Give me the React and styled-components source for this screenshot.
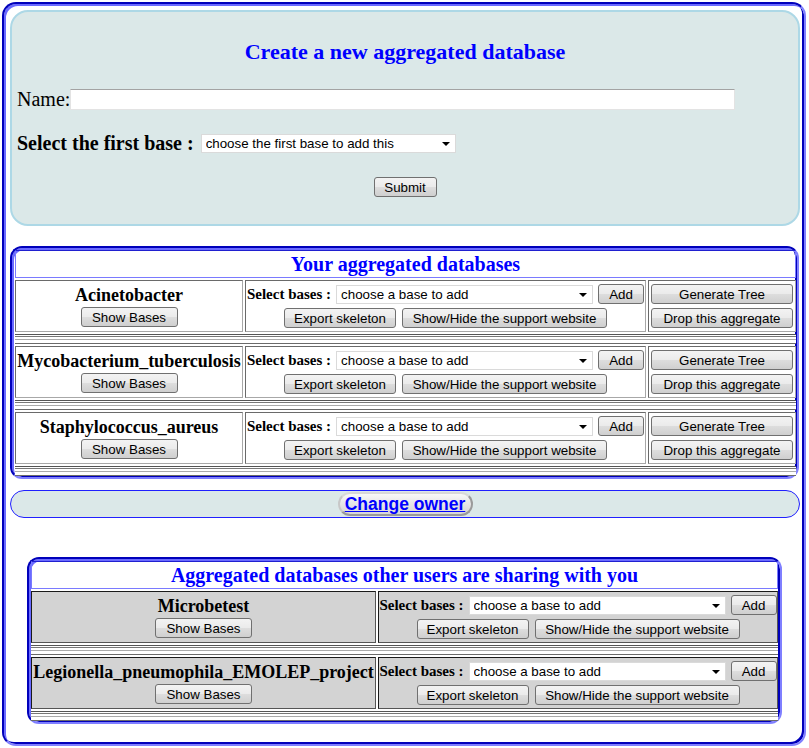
import React from "react";
import styled, { createGlobalStyle } from "styled-components";

const Global = createGlobalStyle`
  html, body { margin: 0; padding: 0; background: #fff; }
  body { font-family: "Liberation Serif", "Times New Roman", serif; color: #000; }
`;

const Page = styled.div`
  margin: 2px 3px 2px 2px;
  border: 2px solid;
  border-color: #0000bb #7f7fff #7f7fff #0000bb;
  box-shadow: inset 2px 2px 0 #6a6aff, inset -2px -2px 0 #0000bb;
  border-radius: 14px;
  padding: 6px 4px 20px 6px;
`;

const CreatePanel = styled.div`
  background: #dbe8e8;
  border: 2px solid #add8e6;
  border-radius: 18px;
  padding: 0 5px 27px 5px;
`;

const PanelTitle = styled.h2`
  margin: 27px 0 0;
  font: bold 22px/25px "Liberation Serif", "Times New Roman", serif;
  color: #0000ff;
  text-align: center;
`;

const FieldRow = styled.div`
  display: flex;
  align-items: center;
  height: 23px;
  margin-top: ${(p) => p.$top}px;
`;

const FieldLabel = styled.span`
  font: ${(p) => (p.$bold ? "bold" : "normal")} 20px/23px "Liberation Serif", "Times New Roman", serif;
  white-space: nowrap;
  margin-right: ${(p) => p.$gap || 0}px;
`;

const NameInput = styled.input`
  box-sizing: border-box;
  width: 665px;
  height: 21px;
  border: 1px solid #e3e3e3;
  border-top-color: #a3a3a3;
  background: #fff;
  padding: 0 3px;
  outline: none;
`;

const SelectWrap = styled.span`
  position: relative;
  display: inline-block;
  width: ${(p) => p.$w}px;
  height: 19px;
  flex: none;
  &::after {
    content: "";
    position: absolute;
    right: 6px;
    top: 8px;
    border-left: 4px solid transparent;
    border-right: 4px solid transparent;
    border-top: 4px solid #000;
    pointer-events: none;
  }
`;

const Select = styled.select`
  appearance: none;
  -webkit-appearance: none;
  box-sizing: border-box;
  width: 100%;
  height: 100%;
  margin: 0;
  border: 1px solid #dadada;
  border-radius: 0;
  background: #fff;
  color: #000;
  padding: 0 0 0 4px;
  font: 13.33px "Liberation Sans", Arial, sans-serif;
  outline: none;
`;

const Btn = styled.button`
  box-sizing: border-box;
  flex: none;
  height: 20px;
  width: ${(p) => (p.$w ? `${p.$w}px` : "100%")};
  margin: 0;
  padding: 0;
  border: 1px solid #707070;
  border-radius: 3px;
  background: linear-gradient(#f3f3f3 0%, #ebebeb 48%, #dddddd 52%, #cfcfcf 100%);
  color: #000;
  font: 13.33px "Liberation Sans", Arial, sans-serif;
  white-space: nowrap;
  cursor: pointer;
`;

const SubmitRow = styled.div`
  display: flex;
  justify-content: center;
  margin-top: 22px;
`;

const Section = styled.div`
  margin: ${(p) => p.$margin};
  border: 2px solid;
  border-color: #0000bb #7f7fff #7f7fff #0000bb;
  box-shadow: inset 2px 2px 0 #6a6aff, inset -2px -2px 0 #0000bb;
  border-radius: 12px;
  padding: 2px ${(p) => p.$padR}px 1px ${(p) => p.$padL}px;
  display: grid;
  grid-template-columns: ${(p) => p.$cols};
  gap: 2px;
  background: #fff;
`;

const SectionTitle = styled.div`
  grid-column: 1 / -1;
  box-sizing: border-box;
  height: 28px;
  border: 1px solid #7a7aff;
  border-top-color: #2020d0;
  display: flex;
  align-items: center;
  justify-content: center;
  font: bold 20px/23px "Liberation Serif", "Times New Roman", serif;
  color: #0000ff;
  white-space: nowrap;
`;

const Cell = styled.div`
  box-sizing: border-box;
  height: 52px;
  border: 1px solid;
  border-color: ${(p) => (p.$shaded ? "#1a1a1a #555 #555 #1a1a1a" : "#6a6a6a #a8a8a8 #a8a8a8 #6a6a6a")};
  background: ${(p) => (p.$shaded ? "#d3d3d3" : "#fff")};
  display: flex;
  flex-direction: column;
  align-items: ${(p) => (p.$stretch ? "stretch" : "center")};
  padding: ${(p) => p.$pad};
  gap: ${(p) => p.$gap}px;
  min-width: 0;
`;

const DbName = styled.div`
  font: bold 18px/22px "Liberation Serif", "Times New Roman", serif;
  white-space: nowrap;
`;

const ActionRow = styled.div`
  display: flex;
  align-items: center;
  gap: ${(p) => p.$gap}px;
`;

const SmallLabel = styled.span`
  font: bold 15px/18px "Liberation Serif", "Times New Roman", serif;
  white-space: nowrap;
`;

const Separator = styled.div`
  grid-column: 1 / -1;
  box-sizing: border-box;
  height: 10px;
  border-top: 1px solid #555;
  border-bottom: 1px solid #6a6a6a;
  background: linear-gradient(
    to bottom,
    #fff 0 1px,
    #777 1px 2px,
    #fff 2px 4px,
    #aaa 4px 5px,
    #fff 5px
  );
`;

const OwnerBar = styled.div`
  box-sizing: border-box;
  height: 28px;
  margin-top: 11px;
  border: 1px solid #2020ff;
  border-radius: 14px;
  background: #dbe8e8;
  display: flex;
  align-items: center;
  justify-content: center;
`;

const OwnerButton = styled.button`
  box-sizing: border-box;
  width: 135px;
  height: 24px;
  margin: 0;
  padding: 0;
  border: 2px solid;
  border-color: #d8d8d8 #9a9a9a #9a9a9a #c8c8c8;
  border-radius: 12px;
  background: linear-gradient(#f8f8f8, #e6e6e6 50%, #d6d6d6);
  color: #0000ff;
  font: bold 17.5px "Liberation Sans", Arial, sans-serif;
  text-decoration: underline;
  cursor: pointer;
`;

const mine = ["Acinetobacter", "Mycobacterium_tuberculosis", "Staphylococcus_aureus"];
const shared = ["Microbetest", "Legionella_pneumophila_EMOLEP_project"];

function BaseActions() {
  return (
    <>
      <ActionRow $gap={5}>
        <SmallLabel>Select bases :</SmallLabel>
        <SelectWrap $w={257}>
          <Select defaultValue="">
            <option value="">choose a base to add</option>
          </Select>
        </SelectWrap>
        <Btn $w={46}>Add</Btn>
      </ActionRow>
      <ActionRow $gap={6}>
        <Btn $w={112}>Export skeleton</Btn>
        <Btn $w={205}>Show/Hide the support website</Btn>
      </ActionRow>
    </>
  );
}

export default function App() {
  return (
    <>
      <Global />
      <Page>
        <CreatePanel>
          <PanelTitle>Create a new aggregated database</PanelTitle>
          <FieldRow $top={24}>
            <FieldLabel>Name:</FieldLabel>
            <NameInput type="text" />
          </FieldRow>
          <FieldRow $top={21}>
            <FieldLabel $bold $gap={7}>Select the first base :</FieldLabel>
            <SelectWrap $w={255}>
              <Select defaultValue="">
                <option value="">choose the first base to add this</option>
              </Select>
            </SelectWrap>
          </FieldRow>
          <SubmitRow>
            <Btn $w={63}>Submit</Btn>
          </SubmitRow>
        </CreatePanel>

        <Section $margin="20px 1px 0 0" $cols="228px 401px 1fr" $padL={3} $padR={1}>
          <SectionTitle>Your aggregated databases</SectionTitle>
          {mine.map((name) => (
            <React.Fragment key={name}>
              <Cell $pad="3px 0 0" $gap={1}>
                <DbName>{name}</DbName>
                <Btn $w={97}>Show Bases</Btn>
              </Cell>
              <Cell $pad="3px 0 0" $gap={4}>
                <BaseActions />
              </Cell>
              <Cell $pad="3px 2px 0" $gap={4} $stretch>
                <Btn>Generate Tree</Btn>
                <Btn>Drop this aggregate</Btn>
              </Cell>
              <Separator />
            </React.Fragment>
          ))}
        </Section>

        <OwnerBar>
          <OwnerButton>Change owner</OwnerButton>
        </OwnerBar>

        <Section $margin="39px 18px 0 17px" $cols="345px 1fr" $padL={2} $padR={2}>
          <SectionTitle>Aggregated databases other users are sharing with you</SectionTitle>
          {shared.map((name) => (
            <React.Fragment key={name}>
              <Cell $shaded $pad="3px 0 0" $gap={1}>
                <DbName>{name}</DbName>
                <Btn $w={97}>Show Bases</Btn>
              </Cell>
              <Cell $shaded $pad="3px 0 0" $gap={4}>
                <BaseActions />
              </Cell>
              <Separator />
            </React.Fragment>
          ))}
        </Section>
      </Page>
    </>
  );
}
